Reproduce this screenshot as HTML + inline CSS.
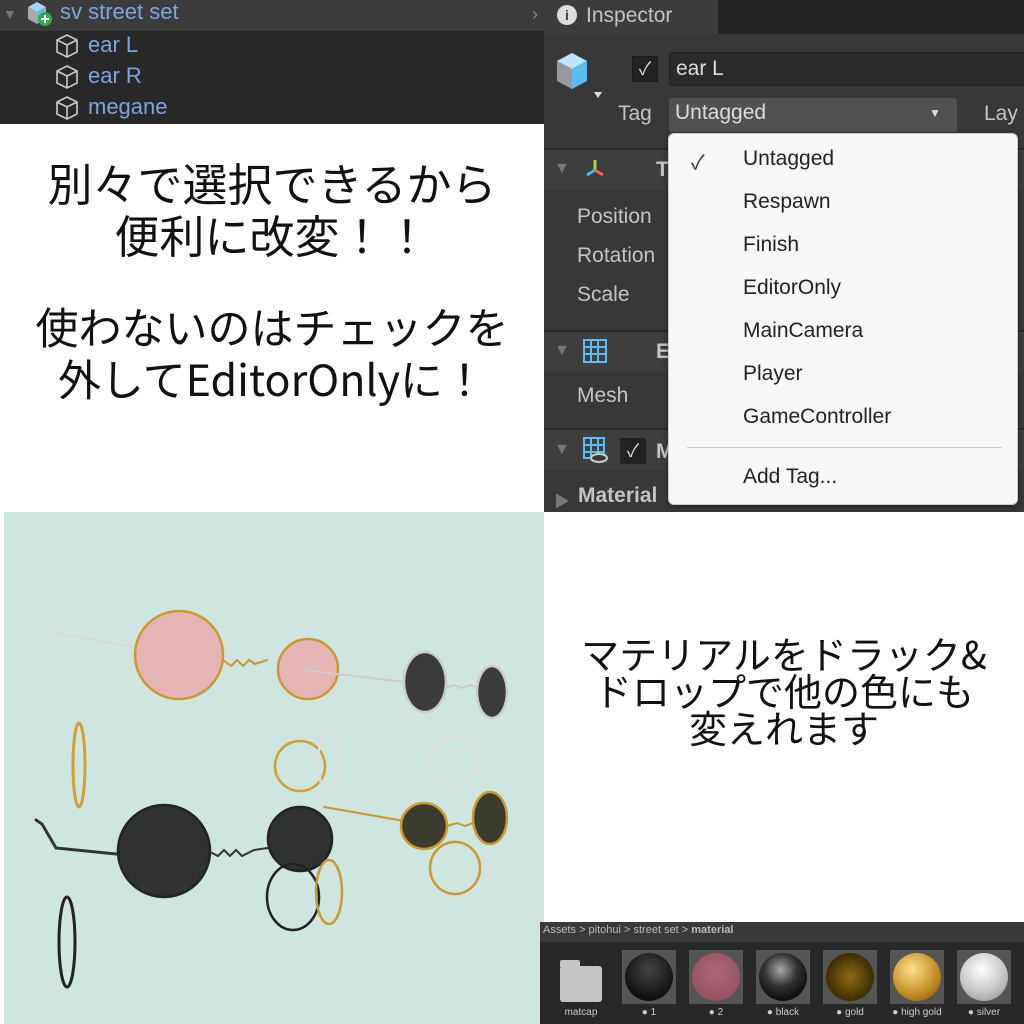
<!DOCTYPE html>
<html><head><meta charset="utf-8"><style>
*{margin:0;padding:0;box-sizing:border-box}
body{width:1024px;height:1024px;position:relative;overflow:hidden;background:#fff;font-family:"Liberation Sans","Noto Sans CJK JP",sans-serif}
.a{position:absolute}
.hier{left:0;top:0;width:544px;height:124px;background:#282828}
.hrow{position:absolute;left:0;width:544px;height:31px;color:#7ea4e0;font-size:22px;line-height:28px}
.jp{position:absolute;font-family:"Noto Sans CJK JP",sans-serif;color:#111;text-align:center;font-weight:400;white-space:nowrap}
.insp{left:544px;top:0;width:480px;height:512px;background:#383838;color:#c4c4c4}
.lbl{position:absolute;left:33px;font-size:21px;color:#c4c4c4}
.menu{left:668px;top:133px;width:350px;height:372px;background:#f8f8f8;border:1px solid #ccc;border-radius:6px;box-shadow:0 2px 6px rgba(0,0,0,.4)}
.mi{position:absolute;left:74px;font-size:21px;color:#222}
.assets{left:540px;top:922px;width:484px;height:102px;background:#282828}
.th{position:absolute;top:28px;width:54px;height:54px;background:#555}
.th div{position:absolute;left:3px;top:3px;width:48px;height:48px;border-radius:50%}
.cap{position:absolute;top:85px;font-size:10px;color:#ccc;width:70px;text-align:center}
</style></head><body>
<div class="a hier">
 <div class="hrow" style="top:0;background:#3c3c3c">
  <span class="a" style="left:3px;top:0;color:#777;font-size:14px">▼</span>
  <svg class="a" style="left:24px;top:1px" width="30" height="26"><path d="M4 6l9-5 9 5-9 5z" fill="#9fd8ff"/><path d="M4 6v12l9 5V11z" fill="#aaa"/><path d="M22 6v12l-9 5V11z" fill="#6cb8ee"/><circle cx="21" cy="18" r="7" fill="#2ab04a"/><path d="M21 14v8M17 18h8" stroke="#fff" stroke-width="2"/></svg>
  <span class="a" style="left:60px;top:-2px">sv street set</span>
 </div>
 <div class="hrow" style="top:31px"><svg class="a" style="left:54px;top:2px" width="26" height="26" fill="none" stroke="#ccc" stroke-width="1.6"><path d="M13 2l10 5v12l-10 5-10-5V7z M3 7l10 5 10-5 M13 12v12"/></svg><span class="a" style="left:88px;top:0">ear L</span></div>
 <div class="hrow" style="top:62px"><svg class="a" style="left:54px;top:2px" width="26" height="26" fill="none" stroke="#ccc" stroke-width="1.6"><path d="M13 2l10 5v12l-10 5-10-5V7z M3 7l10 5 10-5 M13 12v12"/></svg><span class="a" style="left:88px;top:0">ear R</span></div>
 <div class="hrow" style="top:93px"><svg class="a" style="left:54px;top:2px" width="26" height="26" fill="none" stroke="#ccc" stroke-width="1.6"><path d="M13 2l10 5v12l-10 5-10-5V7z M3 7l10 5 10-5 M13 12v12"/></svg><span class="a" style="left:88px;top:0">megane</span></div>
</div>

<div class="jp" style="left:0;top:156px;width:544px;font-size:45px;line-height:52px">別々で選択できるから<br>便利に改変！！</div>
<div class="jp" style="left:0;top:300px;width:544px;font-size:43px;line-height:52px">使わないのはチェックを<br>外してEditorOnlyに！</div>

<div class="a insp">
 <div class="a" style="left:0;top:0;width:480px;height:34px;background:#232323"></div>
 <div class="a" style="left:0;top:0;width:174px;height:34px;background:#3c3c3c"></div>
 <span class="a" style="left:-12px;top:4px;color:#888;font-size:18px">›</span>
 <span class="a" style="left:13px;top:5px;width:20px;height:20px;border-radius:50%;background:#ddd;color:#3c3c3c;font-size:14px;font-weight:bold;text-align:center;line-height:20px">i</span>
 <span class="a" style="left:42px;top:4px;font-size:21px;color:#c4c4c4">Inspector</span>
 <svg class="a" style="left:10px;top:52px" width="50" height="52"><path d="M3 9l15-8 15 8-15 8z" fill="#b8e6ff"/><path d="M3 9v20l15 8V17z" fill="#999"/><path d="M33 9v20l-15 8V17z" fill="#5cbcf2"/><path d="M40 40l8 0-4 6z" fill="#ddd"/></svg>
 <div class="a" style="left:88px;top:56px;width:26px;height:26px;background:#222;border:1px solid #1a1a1a;color:#ddd;text-align:center;font-size:18px;line-height:24px">✓</div>
 <div class="a" style="left:125px;top:52px;width:360px;height:34px;background:#2a2a2a;border:1px solid #222;border-radius:3px"><span class="a" style="left:6px;top:4px;font-size:21px;color:#ddd">ear L</span></div>
 <span class="a" style="left:74px;top:102px;font-size:21px">Tag</span>
 <div class="a" style="left:125px;top:98px;width:288px;height:34px;background:#515151;border-radius:3px"><span class="a" style="left:6px;top:3px;font-size:21px;color:#ddd">Untagged</span><span class="a" style="left:260px;top:8px;font-size:12px;color:#ddd">▼</span></div>
 <span class="a" style="left:440px;top:102px;font-size:21px">Lay</span>
 <div class="a" style="left:0;top:148px;width:480px;height:2px;background:#2a2a2a"></div>
 <div class="a" style="left:0;top:150px;width:480px;height:40px;background:#3e3e3e"></div>
 <span class="a" style="left:10px;top:160px;font-size:16px;color:#777">▼</span>
 <svg class="a" style="left:38px;top:157px" width="26" height="26"><path d="M13 3v10" stroke="#a5d64a" stroke-width="3"/><path d="M13 13l-8 5" stroke="#4fb8f0" stroke-width="3"/><path d="M13 13l8 5" stroke="#f06a3a" stroke-width="3"/></svg>
 <span class="a" style="left:112px;top:158px;font-size:21px;font-weight:bold">T</span>
 <span class="lbl" style="top:205px">Position</span>
 <span class="lbl" style="top:244px">Rotation</span>
 <span class="lbl" style="top:283px">Scale</span>
 <div class="a" style="left:0;top:330px;width:480px;height:2px;background:#2a2a2a"></div>
 <div class="a" style="left:0;top:332px;width:480px;height:40px;background:#3e3e3e"></div>
 <span class="a" style="left:10px;top:342px;font-size:16px;color:#777">▼</span>
 <svg class="a" style="left:38px;top:338px" width="26" height="26" fill="none" stroke="#5cbcf2" stroke-width="2"><rect x="2" y="2" width="22" height="22"/><path d="M9 2v22M16 2v22M2 9h22M2 16h22"/></svg>
 <span class="a" style="left:112px;top:340px;font-size:21px;font-weight:bold">E</span>
 <span class="lbl" style="top:384px">Mesh</span>
 <div class="a" style="left:0;top:428px;width:480px;height:2px;background:#2a2a2a"></div>
 <div class="a" style="left:0;top:430px;width:480px;height:40px;background:#3e3e3e"></div>
 <span class="a" style="left:10px;top:441px;font-size:16px;color:#777">▼</span>
 <svg class="a" style="left:38px;top:436px" width="28" height="28" fill="none" stroke="#5cbcf2" stroke-width="2"><rect x="2" y="2" width="20" height="20"/><path d="M9 2v20M16 2v20M2 9h20M2 16h20"/><ellipse cx="17" cy="22" rx="8" ry="4" fill="#383838" stroke="#ccc"/></svg>
 <div class="a" style="left:76px;top:438px;width:26px;height:26px;background:#222;color:#ddd;text-align:center;font-size:18px;line-height:26px">✓</div>
 <span class="a" style="left:112px;top:440px;font-size:21px;font-weight:bold">M</span>
 <span class="a" style="left:10px;top:488px;font-size:16px;color:#777">▶</span>
 <span class="a" style="left:34px;top:484px;font-size:21px;font-weight:bold">Material</span>
</div>
<div class="a menu">
 <span class="a" style="left:22px;top:12px;font-size:20px;color:#333">✓</span>
 <span class="mi" style="top:13px">Untagged</span>
 <span class="mi" style="top:56px">Respawn</span>
 <span class="mi" style="top:99px">Finish</span>
 <span class="mi" style="top:142px">EditorOnly</span>
 <span class="mi" style="top:185px">MainCamera</span>
 <span class="mi" style="top:228px">Player</span>
 <span class="mi" style="top:271px">GameController</span>
 <div class="a" style="left:18px;top:313px;width:315px;height:1px;background:#ccc"></div>
 <span class="mi" style="top:331px">Add Tag...</span>
</div>

<svg class="a" style="left:4px;top:512px" width="540" height="512">
 <rect width="540" height="512" fill="#cfe5df"/>
 <g fill="none" stroke-linecap="round">
  <path d="M46 125l6-4 78 14" stroke="#d8d8d8" stroke-width="2"/>
  <circle cx="175" cy="143" r="44" fill="#e5b5b5" stroke="#c89a30" stroke-width="2.5"/>
  <path d="M219 148l8 6 6-6 6 6 6-6 6 4 12-4" stroke="#c89a30" stroke-width="2"/>
  <circle cx="304" cy="157" r="30" fill="#e5b5b5" stroke="#c89a30" stroke-width="2.5"/>
  <path d="M300 158l100 12" stroke="#ccc" stroke-width="2"/>
  <ellipse cx="421" cy="170" rx="21" ry="30" fill="#3a3c3c" stroke="#ccc" stroke-width="2.5"/>
  <path d="M442 176l8-3 8 3 8-3 8 3" stroke="#ccc" stroke-width="2"/>
  <ellipse cx="488" cy="180" rx="15" ry="26" fill="#3a3c3c" stroke="#ccc" stroke-width="2.5"/>
  <ellipse cx="75" cy="253" rx="6" ry="42" stroke="#d0a030" stroke-width="3"/>
  <circle cx="296" cy="254" r="25" stroke="#d0a030" stroke-width="2.5"/>
  <ellipse cx="325" cy="250" rx="11" ry="30" stroke="#ddd" stroke-width="2.5"/>
  <circle cx="449" cy="249" r="24" stroke="#ddd" stroke-width="2.5"/>
  <path d="M32 308l6 4 14 24 60 6" stroke="#333" stroke-width="3"/>
  <circle cx="160" cy="339" r="46" fill="#2f3230" stroke="#222" stroke-width="2.5"/>
  <path d="M206 340l8 4 6-6 6 6 6-6 6 6 12-6 14-2" stroke="#333" stroke-width="2"/>
  <circle cx="296" cy="327" r="32" fill="#2f3230" stroke="#222" stroke-width="2.5"/>
  <path d="M320 295l80 14" stroke="#c89a30" stroke-width="2"/>
  <circle cx="420" cy="314" r="23" fill="#3b3b30" stroke="#c89a30" stroke-width="2.5"/>
  <path d="M443 314l10-3 8 3 8-3" stroke="#c89a30" stroke-width="2"/>
  <ellipse cx="486" cy="306" rx="17" ry="26" fill="#3b3b30" stroke="#c89a30" stroke-width="2.5"/>
  <ellipse cx="451" cy="356" rx="25" ry="26" stroke="#c89a30" stroke-width="2.5"/>
  <ellipse cx="289" cy="385" rx="26" ry="33" stroke="#222" stroke-width="2.5"/>
  <ellipse cx="325" cy="380" rx="13" ry="32" stroke="#c89a30" stroke-width="2.5"/>
  <ellipse cx="63" cy="430" rx="8" ry="45" stroke="#222" stroke-width="3"/>
 </g>
</svg>

<div class="jp" style="left:544px;top:634px;width:480px;font-size:38px;line-height:37px">マテリアルをドラック&amp;<br>ドロップで他の色にも<br>変えれます</div>

<div class="a assets">
 <div class="a" style="left:0;top:0;width:484px;height:20px;background:#3a3a3a"></div>
 <span class="a" style="left:3px;top:2px;font-size:11px;color:#bbb">Assets &gt; pitohui &gt; street set &gt; <b>material</b></span>
 <div class="a" style="left:20px;top:44px;width:42px;height:36px;background:#c4c4c4;border-radius:3px"></div>
 <div class="a" style="left:20px;top:38px;width:20px;height:8px;background:#c4c4c4;border-radius:2px"></div>
 <span class="cap" style="left:6px">matcap</span>
 <div class="th" style="left:82px"><div style="background:radial-gradient(circle at 50% 35%,#444,#111 70%)"></div></div>
 <div class="th" style="left:149px"><div style="background:radial-gradient(circle at 50% 40%,#b06878,#8a4a5a)"></div></div>
 <div class="th" style="left:216px"><div style="background:radial-gradient(circle at 45% 35%,#aaa,#333 40%,#111 70%)"></div></div>
 <div class="th" style="left:283px"><div style="background:radial-gradient(circle at 50% 50%,#8a6a10,#3a2a05 75%)"></div></div>
 <div class="th" style="left:350px"><div style="background:radial-gradient(circle at 40% 35%,#ffe090,#c08a20 60%,#6a4a10)"></div></div>
 <div class="th" style="left:417px"><div style="background:radial-gradient(circle at 45% 35%,#fff,#ccc 50%,#888)"></div></div>
 <span class="cap" style="left:74px">● 1</span>
 <span class="cap" style="left:141px">● 2</span>
 <span class="cap" style="left:208px">● black</span>
 <span class="cap" style="left:275px">● gold</span>
 <span class="cap" style="left:342px">● high gold</span>
 <span class="cap" style="left:409px">● silver</span>
</div>
</body></html>
